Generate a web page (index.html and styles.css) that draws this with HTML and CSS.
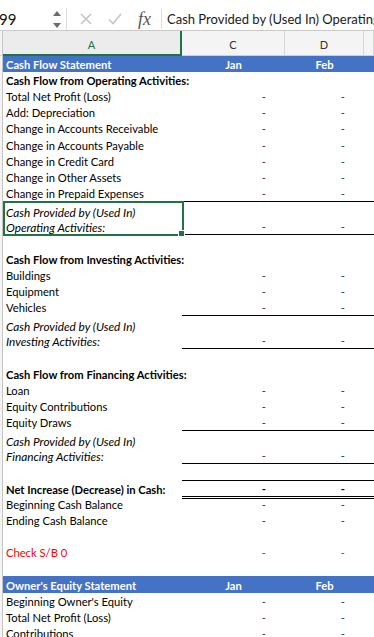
FILE: index.html
```
<html>
	<head>
		<title>Cash Flow Statement</title>
		<link rel="stylesheet" href="styles.css">
	</head>
	<body>
		<div class="fbar">
			<div class="namebox">99</div>
			<div class="spin">
				<svg width="8" height="17" viewBox="0 0 8 17"><path d="M4 0 L8 5 L0 5 Z" fill="#6b6b6b"/><path d="M0 12 L8 12 L4 17 Z" fill="#6b6b6b"/></svg>
			</div>
			<div class="vsep"></div>
			<div class="ico cancel">
				<svg width="12" height="12" viewBox="0 0 12 12"><path d="M1 1 L11 11 M11 1 L1 11" stroke="#c4c4c4" stroke-width="1.6" fill="none"/></svg>
			</div>
			<div class="ico enter">
				<svg width="14" height="12" viewBox="0 0 14 12"><path d="M1 6.5 L5 10.5 L13 1" stroke="#c4c4c4" stroke-width="1.6" fill="none"/></svg>
			</div>
			<div class="fx">fx</div>
			<div class="vsep2"></div>
			<div class="ftext">Cash Provided by (Used In) Operating Activities:</div>
		</div>

		<div class="colhead">
			<div class="ch rh"></div>
			<div class="ch cur">A</div>
			<div class="ch">C</div>
			<div class="ch">D</div>
			<div class="ch"></div>
		</div>

		<div class="sheet">
			<div class="row head"><div class="rh"></div><div class="a">Cash Flow Statement</div><div class="c ctr">Jan</div><div class="d ctr">Feb</div><div class="e"></div></div>
			<div class="row"><div class="rh"></div><div class="a b">Cash Flow from Operating Activities:</div><div class="c"></div><div class="d"></div><div class="e"></div></div>
			<div class="row"><div class="rh"></div><div class="a">Total Net Profit (Loss)</div><div class="c num">-</div><div class="d num">-</div><div class="e"></div></div>
			<div class="row"><div class="rh"></div><div class="a">Add: Depreciation</div><div class="c num">-</div><div class="d num">-</div><div class="e"></div></div>
			<div class="row"><div class="rh"></div><div class="a">Change in Accounts Receivable</div><div class="c num">-</div><div class="d num">-</div><div class="e"></div></div>
			<div class="row"><div class="rh"></div><div class="a">Change in Accounts Payable</div><div class="c num">-</div><div class="d num">-</div><div class="e"></div></div>
			<div class="row"><div class="rh"></div><div class="a">Change in Credit Card</div><div class="c num">-</div><div class="d num">-</div><div class="e"></div></div>
			<div class="row"><div class="rh"></div><div class="a">Change in Other Assets</div><div class="c num">-</div><div class="d num">-</div><div class="e"></div></div>
			<div class="row"><div class="rh"></div><div class="a">Change in Prepaid Expenses</div><div class="c num">-</div><div class="d num">-</div><div class="e"></div></div>
			<div class="row tall ruled"><div class="rh"></div><div class="a i sel">Cash Provided by (Used In)<br>Operating Activities:</div><div class="c num">-</div><div class="d num">-</div><div class="e"></div></div>
			<div class="row"><div class="rh"></div><div class="a"></div><div class="c"></div><div class="d"></div><div class="e"></div></div>

			<div class="row"><div class="rh"></div><div class="a b">Cash Flow from Investing Activities:</div><div class="c"></div><div class="d"></div><div class="e"></div></div>
			<div class="row"><div class="rh"></div><div class="a">Buildings</div><div class="c num">-</div><div class="d num">-</div><div class="e"></div></div>
			<div class="row"><div class="rh"></div><div class="a">Equipment</div><div class="c num">-</div><div class="d num">-</div><div class="e"></div></div>
			<div class="row"><div class="rh"></div><div class="a">Vehicles</div><div class="c num">-</div><div class="d num">-</div><div class="e"></div></div>
			<div class="row tall ruled"><div class="rh"></div><div class="a i">Cash Provided by (Used In)<br>Investing Activities:</div><div class="c num">-</div><div class="d num">-</div><div class="e"></div></div>
			<div class="row"><div class="rh"></div><div class="a"></div><div class="c"></div><div class="d"></div><div class="e"></div></div>

			<div class="row"><div class="rh"></div><div class="a b">Cash Flow from Financing Activities:</div><div class="c"></div><div class="d"></div><div class="e"></div></div>
			<div class="row"><div class="rh"></div><div class="a">Loan</div><div class="c num">-</div><div class="d num">-</div><div class="e"></div></div>
			<div class="row"><div class="rh"></div><div class="a">Equity Contributions</div><div class="c num">-</div><div class="d num">-</div><div class="e"></div></div>
			<div class="row"><div class="rh"></div><div class="a">Equity Draws</div><div class="c num">-</div><div class="d num">-</div><div class="e"></div></div>
			<div class="row tall ruled"><div class="rh"></div><div class="a i">Cash Provided by (Used In)<br>Financing Activities:</div><div class="c num">-</div><div class="d num">-</div><div class="e"></div></div>
			<div class="row"><div class="rh"></div><div class="a"></div><div class="c"></div><div class="d"></div><div class="e"></div></div>

			<div class="row total"><div class="rh"></div><div class="a b">Net Increase (Decrease) in Cash:</div><div class="c num b">-</div><div class="d num b">-</div><div class="e"></div></div>
			<div class="row"><div class="rh"></div><div class="a">Beginning Cash Balance</div><div class="c num">-</div><div class="d num">-</div><div class="e"></div></div>
			<div class="row"><div class="rh"></div><div class="a">Ending Cash Balance</div><div class="c num">-</div><div class="d num">-</div><div class="e"></div></div>
			<div class="row"><div class="rh"></div><div class="a"></div><div class="c"></div><div class="d"></div><div class="e"></div></div>
			<div class="row red"><div class="rh"></div><div class="a">Check S/B 0</div><div class="c num">-</div><div class="d num">-</div><div class="e"></div></div>
			<div class="row"><div class="rh"></div><div class="a"></div><div class="c"></div><div class="d"></div><div class="e"></div></div>

			<div class="row head"><div class="rh"></div><div class="a">Owner's Equity Statement</div><div class="c ctr">Jan</div><div class="d ctr">Feb</div><div class="e"></div></div>
			<div class="row"><div class="rh"></div><div class="a">Beginning Owner's Equity</div><div class="c num">-</div><div class="d num">-</div><div class="e"></div></div>
			<div class="row"><div class="rh"></div><div class="a">Total Net Profit (Loss)</div><div class="c num">-</div><div class="d num">-</div><div class="e"></div></div>
			<div class="row"><div class="rh"></div><div class="a">Contributions</div><div class="c num">-</div><div class="d num">-</div><div class="e"></div></div>
		</div>
	</body>
</html>
```

FILE: styles.css
```
body {
	margin: 0;
	width: 374px;
	height: 637px;
	overflow: hidden;
	background: #ffffff;
	font-family: Lato, "Open Sans", sans-serif;
	color: #000000;
}

/* formula bar */
.fbar {
	box-sizing: border-box;
	height: 31px;
	padding-top: 8px;
	border-bottom: 1px solid #c9c9c9;
	display: flex;
	align-items: center;
	white-space: nowrap;
	overflow: hidden;
}
.fbar > div {
	flex-shrink: 0;
}
.namebox {
	width: 54px;
	font-size: 15px;
	color: #111111;
	margin-left: -1px;
}
.spin {
	width: 8px;
	display: flex;
}
.vsep {
	width: 1px;
	height: 23px;
	background: #dcdcdc;
	margin-left: 5px;
}
.ico {
	display: flex;
}
.cancel {
	margin-left: 13px;
}
.enter {
	margin-left: 16px;
}
.fx {
	margin-left: 16px;
	width: 16px;
	font-family: "Liberation Serif", serif;
	font-style: italic;
	font-size: 18px;
	color: #555555;
	line-height: 18px;
}
.vsep2 {
	width: 1px;
	height: 20px;
	background: #dcdcdc;
	margin-left: 7px;
}
.ftext {
	margin-left: 5px;
	font-size: 13px;
	color: #1a1a1a;
}

/* column headers */
.colhead {
	display: grid;
	grid-template-columns: 3px 179px 103px 79px 1fr;
	height: 25px;
	background: #f4f4f4;
}
.ch {
	box-sizing: border-box;
	border-right: 1px solid #d6d6d6;
	border-bottom: 1px solid #d0d0d0;
	font-size: 11px;
	color: #333333;
	display: flex;
	align-items: center;
	justify-content: center;
	padding-top: 3px;
}
.ch.rh {
	border-right: 1px solid #c4c4c4;
}
.ch.cur {
	color: #217346;
	background: #ececec;
	border-right: 2px solid #217346;
	border-bottom: 2px solid #217346;
}

/* cells */
.row {
	display: grid;
	grid-template-columns: 3px 179px 103px 79px 1fr;
	height: 16.1px;
	font-size: 11.2px;
	line-height: 15px;
}
.row.tall {
	height: 34px;
}
.row > div {
	box-sizing: border-box;
	display: flex;
	align-items: flex-end;
	white-space: nowrap;
}
.row .rh {
	background: #f4f4f4;
	border-right: 1px solid #c4c4c4;
}
.row .a {
	padding-left: 3px;
	overflow: visible;
}
.row.tall .a {
	white-space: normal;
}
.num {
	justify-content: flex-end;
	padding-right: 19px;
	color: #333333;
}
.ctr {
	justify-content: center;
}
.b {
	font-weight: bold;
}
.i {
	font-style: italic;
	font-size: 11.8px;
}

.head .a, .head .c, .head .d, .head .e {
	background: #4472c4;
	color: #ffffff;
	font-weight: bold;
}

.ruled .c, .ruled .d, .ruled .e {
	border-top: 1px solid #000000;
	border-bottom: 1px solid #000000;
}
.total .a {
	padding-bottom: 2px;
}
.total .c, .total .d, .total .e {
	border-top: 1px solid #000000;
	border-bottom: 3px double #000000;
}
.total .num {
	color: #000000;
}
.red .a, .red .num {
	color: #ff0000;
}

/* selected cell */
.sel {
	position: relative;
}
.sel::after {
	content: "";
	position: absolute;
	top: 0;
	left: 0;
	right: -2px;
	bottom: -1px;
	border: 2px solid #217346;
}
.sel::before {
	content: "";
	position: absolute;
	right: -3px;
	bottom: -2px;
	width: 5px;
	height: 5px;
	background: #217346;
	border: 1px solid #ffffff;
	z-index: 1;
}
```
